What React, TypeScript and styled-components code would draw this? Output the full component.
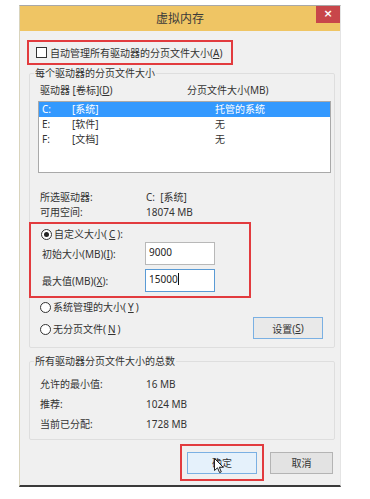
import styled, { createGlobalStyle } from 'styled-components';

const GlobalStyle = createGlobalStyle`
    body {
        margin: 0;
        background: #fff;
        font-family: "Noto Sans", "Noto Sans CJK SC", sans-serif;
        font-size: 10px;
        color: #333;
    }
`;

const Page = styled.div`
    padding: 5px 0 0 19px;
    height: 499px;
    box-sizing: border-box;
`;

const Window = styled.div`
    width: 322px;
    height: 482px;
    box-sizing: border-box;
    background: #f0f0f0;
    border-top: 1px solid #a8a8a8;
    border-left: 1px solid #d9d4bd;
    border-right: 1px solid #e4e4e4;
    border-bottom: 2px solid #3a3a3a;
    display: flex;
    flex-direction: column;
`;

const TitleBar = styled.div`
    height: 25px;
    background: #efc564;
    display: grid;
    grid-template-columns: 1fr auto 1fr;
    flex-shrink: 0;
`;

const Title = styled.div`
    grid-column: 2;
    font-size: 12px;
    line-height: 25px;
    color: #3a3a3a;
`;

const CloseButton = styled.div`
    grid-column: 3;
    justify-self: end;
    width: 24px;
    height: 17px;
    background: #c8464a;
    color: #fff;
    font-size: 11px;
    font-weight: bold;
    line-height: 16px;
    text-align: center;
    font-family: "DejaVu Sans", sans-serif;
`;

const Body = styled.div`
    padding: 9px 0 0 7px;
    display: flex;
    flex-direction: column;
`;

const Annot = styled.div<{ $w: number; $h: number }>`
    border: 2px solid #e23b3e;
    width: ${p => p.$w}px;
    height: ${p => p.$h}px;
    box-sizing: border-box;
`;

const CheckRow = styled.label`
    display: flex;
    align-items: center;
    gap: 3px;
    height: 100%;
    padding-left: 7px;
`;

const Checkbox = styled.span`
    width: 11px;
    height: 11px;
    box-sizing: border-box;
    border: 1px solid #333;
    background: #fff;
`;

const U = styled.span`
    text-decoration: underline;
`;

const Group = styled.fieldset<{ $h: number; $mt: number }>`
    margin: ${p => p.$mt}px 0 0 2px;
    padding: 0;
    width: 306px;
    height: ${p => p.$h}px;
    box-sizing: border-box;
    border: 1px solid #dedede;
    border-radius: 2px;
    min-width: 0;
`;

const Legend = styled.legend`
    padding: 0 1px;
    margin-left: 4px;
    line-height: 14px;
    color: #333;
`;

const ColHeads = styled.div`
    display: grid;
    grid-template-columns: 147px 1fr;
    padding: 3px 0 0 10px;
    line-height: 14px;
`;

const ListBox = styled.div`
    margin: 4px 0 0 8px;
    width: 293px;
    height: 72px;
    box-sizing: border-box;
    border: 1px solid #a9a9a9;
    background: #fff;
`;

const ListRow = styled.div<{ $sel?: boolean }>`
    display: grid;
    grid-template-columns: 30px 143px 1fr;
    height: 15px;
    line-height: 15px;
    padding-left: 3px;
    background: ${p => (p.$sel ? '#3399ff' : 'transparent')};
    color: ${p => (p.$sel ? '#fff' : '#333')};
`;

const InfoGrid = styled.div<{ $pt: number; $gap: number }>`
    display: grid;
    grid-template-columns: 106px 1fr;
    row-gap: ${p => p.$gap}px;
    padding: ${p => p.$pt}px 0 0 10px;
    line-height: 15px;
`;

const CustomBox = styled.div`
    margin: 2px 0 0 -1px;
`;

const InnerCustom = styled.div`
    display: flex;
    flex-direction: column;
    padding: 2px 0 0 10px;
`;

const RadioRow = styled.div`
    display: flex;
    align-items: center;
    gap: 2px;
    line-height: 16px;
    height: 16px;
`;

const Radio = styled.span<{ $on?: boolean }>`
    width: 11px;
    height: 11px;
    box-sizing: border-box;
    border-radius: 50%;
    border: 1px solid #333;
    background: #fff;
    display: flex;
    align-items: center;
    justify-content: center;
    &::after {
        content: '';
        width: 5px;
        height: 5px;
        border-radius: 50%;
        background: ${p => (p.$on ? '#222' : 'transparent')};
    }
`;

const FieldRow = styled.div<{ $mt: number }>`
    display: grid;
    grid-template-columns: 104px 70px;
    align-items: center;
    margin-top: ${p => p.$mt}px;
    & > span {
        padding-left: 1px;
    }
`;

const TextInput = styled.div<{ $focus?: boolean }>`
    height: 23px;
    box-sizing: border-box;
    border: 1px solid ${p => (p.$focus ? '#5a9bd5' : '#b8b8b8')};
    background: #fff;
    padding: 2px 0 0 3px;
    line-height: 14px;
    color: #222;
`;

const Caret = styled.span`
    display: inline-block;
    width: 1px;
    height: 12px;
    background: #111;
    vertical-align: -2px;
`;

const LowerRow = styled.div`
    display: flex;
    justify-content: space-between;
    align-items: flex-start;
    padding: 1px 11px 0 10px;
`;

const RadioStack = styled.div`
    display: flex;
    flex-direction: column;
    gap: 6px;
`;

const Button = styled.div<{ $w: number; $primary?: boolean }>`
    position: relative;
    width: ${p => p.$w}px;
    height: 22px;
    box-sizing: border-box;
    border: 1px solid ${p => (p.$primary ? '#7ab0e3' : '#b4b4b4')};
    background: ${p => (p.$primary ? '#e5f1fb' : '#e3e3e3')};
    display: flex;
    align-items: center;
    justify-content: center;
    color: #333;
`;

const SetButton = styled(Button)`
    margin-top: 18px;
    background: #e9e9e9;
`;

const Footer = styled.div`
    display: flex;
    align-items: center;
    padding: 4px 0 0 153px;
    gap: 6px;
`;

const OkAnnot = styled(Annot)`
    display: flex;
    align-items: center;
    justify-content: center;
`;

const Cursor = styled.svg`
    position: absolute;
    left: 26px;
    top: 5px;
`;

export default function App() {
    return (
        <>
            <GlobalStyle />
            <Page>
                <Window>
                    <TitleBar>
                        <Title>虚拟内存</Title>
                        <CloseButton>×</CloseButton>
                    </TitleBar>
                    <Body>
                        <Annot $w={206} $h={25}>
                            <CheckRow>
                                <Checkbox />
                                <span>自动管理所有驱动器的分页文件大小(<U>A</U>)</span>
                            </CheckRow>
                        </Annot>
                        <Group $h={282} $mt={1}>
                            <Legend>每个驱动器的分页文件大小</Legend>
                            <ColHeads>
                                <span>驱动器 [卷标](<U>D</U>)</span>
                                <span>分页文件大小(MB)</span>
                            </ColHeads>
                            <ListBox>
                                <ListRow $sel><span>C:</span><span>[系统]</span><span>托管的系统</span></ListRow>
                                <ListRow><span>E:</span><span>[软件]</span><span>无</span></ListRow>
                                <ListRow><span>F:</span><span>[文档]</span><span>无</span></ListRow>
                            </ListBox>
                            <InfoGrid $pt={17} $gap={0}>
                                <span>所选驱动器:</span><span>C:&nbsp;&nbsp;[系统]</span>
                                <span>可用空间:</span><span>18074 MB</span>
                            </InfoGrid>
                            <CustomBox>
                                <Annot $w={222} $h={76}>
                                    <InnerCustom>
                                        <RadioRow><Radio $on />自定义大小(<U>C</U>):</RadioRow>
                                        <FieldRow $mt={0}>
                                            <span>初始大小(MB)(<U>I</U>):</span>
                                            <TextInput>9000</TextInput>
                                        </FieldRow>
                                        <FieldRow $mt={4}>
                                            <span>最大值(MB)(<U>X</U>):</span>
                                            <TextInput $focus>15000<Caret /></TextInput>
                                        </FieldRow>
                                    </InnerCustom>
                                </Annot>
                            </CustomBox>
                            <LowerRow>
                                <RadioStack>
                                    <RadioRow><Radio />系统管理的大小(<U>Y</U>)</RadioRow>
                                    <RadioRow><Radio />无分页文件(<U>N</U>)</RadioRow>
                                </RadioStack>
                                <SetButton $w={70} $primary>设置(<U>S</U>)</SetButton>
                            </LowerRow>
                        </Group>
                        <Group $h={86} $mt={6}>
                            <Legend>所有驱动器分页文件大小的总数</Legend>
                            <InfoGrid $pt={9} $gap={5}>
                                <span>允许的最小值:</span><span>16 MB</span>
                                <span>推荐:</span><span>1024 MB</span>
                                <span>当前已分配:</span><span>1728 MB</span>
                            </InfoGrid>
                        </Group>
                        <Footer>
                            <OkAnnot $w={84} $h={37}>
                                <Button $w={70} $primary>
                                    确定
                                    <Cursor width="10" height="16" viewBox="0 0 10 16">
                                        <path d="M0.5 0.5 L0.5 12.5 L3.5 9.8 L5.6 14.6 L7.3 13.9 L5.3 9.2 L9.2 9.2 Z" fill="#fff" stroke="#222" strokeWidth="1" strokeLinejoin="round" />
                                    </Cursor>
                                </Button>
                            </OkAnnot>
                            <Button $w={63}>取消</Button>
                        </Footer>
                    </Body>
                </Window>
            </Page>
        </>
    );
}
